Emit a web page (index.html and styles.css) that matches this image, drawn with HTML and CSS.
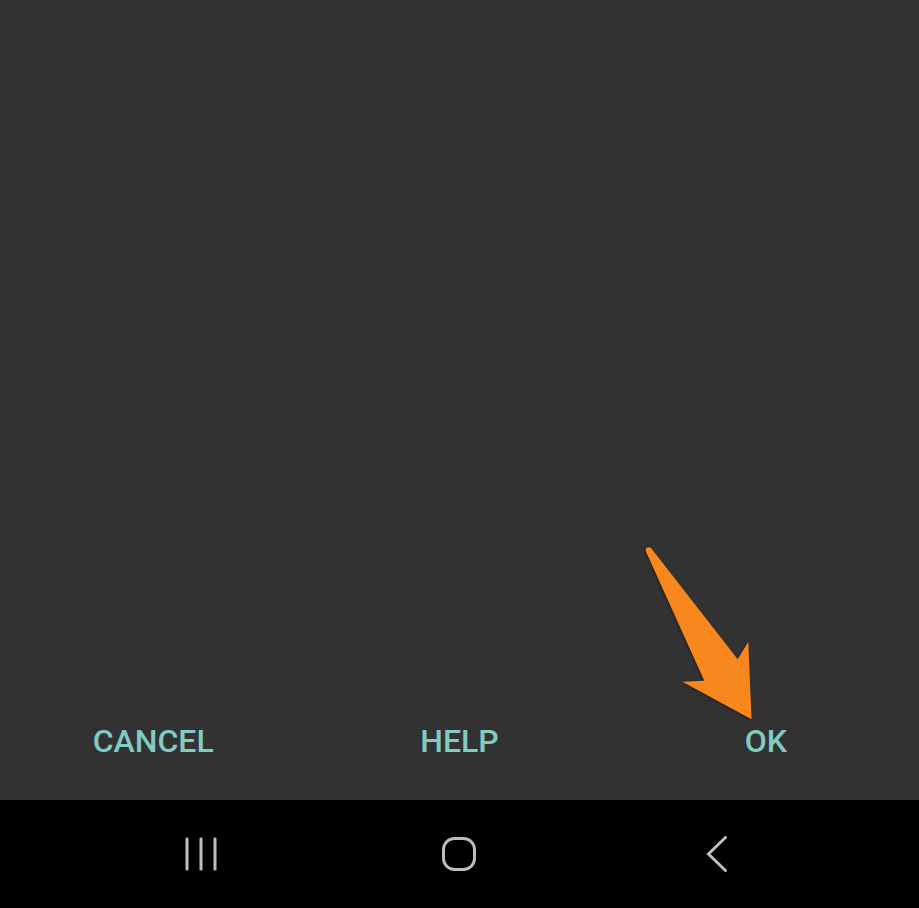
FILE: index.html
```html
<!DOCTYPE html>
<html lang="en">
<head>
<meta charset="utf-8">
<title>Dialog</title>
<link rel="stylesheet" href="styles.css">
</head>
<body>
<div class="screen">
  <main class="dialog">
    <div class="actions">
      <button class="action">CANCEL</button>
      <button class="action">HELP</button>
      <button class="action">OK</button>
    </div>
  </main>
  <nav class="navbar">
    <span class="nav-item">
      <svg class="icon-recents" width="34" height="34" viewBox="0 0 34 34">
        <rect x="1.5" y="0.5" width="3" height="33" rx="1.3"/>
        <rect x="15.5" y="0.5" width="3" height="33" rx="1.3"/>
        <rect x="29.5" y="0.5" width="3" height="33" rx="1.3"/>
      </svg>
    </span>
    <span class="nav-item">
      <svg class="icon-home" width="34" height="34" viewBox="0 0 34 34">
        <rect x="1.5" y="1.5" width="31" height="31" rx="11" ry="11"/>
      </svg>
    </span>
    <span class="nav-item">
      <svg class="icon-back" width="22" height="36" viewBox="0 0 22 36">
        <polyline points="19.5,1.5 2.5,18 19.5,34.5"/>
      </svg>
    </span>
  </nav>
  <svg class="pointer-arrow" width="919" height="908" viewBox="0 0 919 908">
    <circle cx="648.6" cy="550.2" r="2.9"/>
    <polygon points="645.9,551.6 704.3,680.7 682.3,681.7 751.5,719.3 748.3,641.7 737.7,659.3 651.2,548.2"/>
  </svg>
</div>
</body>
</html>
```

FILE: styles.css
```css
* {
  box-sizing: border-box;
}

html, body {
  margin: 0;
  padding: 0;
  background: #323232;
}

.screen {
  position: relative;
  width: 919px;
  height: 908px;
  display: grid;
  grid-template-rows: 800px 108px;
  overflow: hidden;
  font-family: Roboto, "Liberation Sans", sans-serif;
}

.dialog {
  background: #323232;
  display: flex;
  flex-direction: column;
  justify-content: flex-end;
  padding-bottom: 27px;
}

.actions {
  display: grid;
  grid-template-columns: 1fr 1fr 1fr;
  height: 64px;
}

.action {
  appearance: none;
  background: transparent;
  border: 0;
  margin: 0;
  padding: 0;
  font-family: Roboto, "Liberation Sans", sans-serif;
  font-weight: 500;
  font-size: 32px;
  line-height: 64px;
  color: #80cbc2;
  text-align: center;
}

.navbar {
  background: #000;
  display: grid;
  grid-template-columns: 258px 258px 258px;
  justify-content: center;
  align-items: center;
  padding-right: 2px;
}

.nav-item {
  display: flex;
  justify-content: center;
  align-items: center;
  height: 108px;
}

.icon-recents rect {
  fill: #bdbdbd;
}

.icon-home rect {
  fill: none;
  stroke: #bdbdbd;
  stroke-width: 3;
}

.icon-back polyline {
  fill: none;
  stroke: #bdbdbd;
  stroke-width: 3;
  stroke-linecap: round;
  stroke-linejoin: miter;
}

.pointer-arrow {
  position: absolute;
  left: 0;
  top: 0;
  pointer-events: none;
  filter: drop-shadow(-1px 1px 1px rgba(0, 0, 0, 0.35));
}

.pointer-arrow polygon,
.pointer-arrow circle {
  fill: #f8871d;
}
```
